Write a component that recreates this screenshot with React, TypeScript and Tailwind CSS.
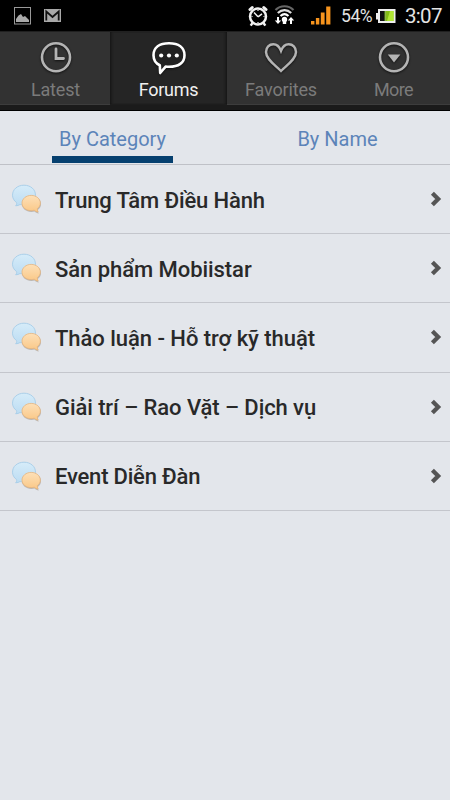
import clsx from "clsx";
import type { ReactNode } from "react";

type NavItem = {
  label: string;
  icon: ReactNode;
  active?: boolean;
  className: string;
  labelClass: string;
};

type Forum = {
  title: string;
  className: string;
};

const ClockIcon = () => (
  <svg width="34" height="34" viewBox="0 0 34 34" fill="none" stroke="#b4b4b4">
    <circle cx="17" cy="17.3" r="14" strokeWidth="2.6" />
    <path d="M17 9v9.5h7.5" strokeWidth="2.8" strokeLinecap="round" />
  </svg>
);

const SpeechIcon = () => (
  <svg width="36" height="36" viewBox="0 0 36 36" fill="none">
    <path
      d="M8.8 26.200C4.600 24.300 2.500 21 2.500 16.200 2.500 8.500 8.500 4.300 18 4.300s15.500 4.200 15.500 11.900c0 7.700-6 11.600-15.500 11.600-1.200 0-2.300 0-3.400-.2L9.200 34z"
      fill="#222"
      stroke="#fff"
      strokeWidth="2.6"
      strokeLinejoin="round"
    />
    <circle cx="10.2" cy="16.500" r="2.100" fill="#fff" />
    <circle cx="18" cy="16.500" r="2.100" fill="#fff" />
    <circle cx="25.800" cy="16.500" r="2.100" fill="#fff" />
  </svg>
);

const HeartIcon = () => (
  <svg width="36" height="34" viewBox="0 0 36 34" fill="none">
    <path
      d="M18 31C12.500 25.300 3 19.500 3 12 3 7.300 6.300 4.300 10.300 4.300c3.600 0 6 2.200 7.700 6.600 1.700-4.400 4.100-6.600 7.700-6.600 4 0 7.300 3 7.300 7.700C33 19.500 23.500 25.300 18 31z"
      stroke="#b4b4b4"
      strokeWidth="2.500"
    />
  </svg>
);

const MoreIcon = () => (
  <svg width="34" height="34" viewBox="0 0 34 34" fill="none">
    <circle cx="17" cy="17.3" r="14" stroke="#b4b4b4" strokeWidth="2.6" />
    <path d="M10.800 14.600h12.600L17 22.500z" fill="#b4b4b4" />
  </svg>
);

const navItems: NavItem[] = [
  {
    label: "Latest",
    icon: <ClockIcon />,
    className: "w-[110px] pl-[1px]",
    labelClass: "tracking-[-0.15px]",
  },
  {
    label: "Forums",
    icon: <SpeechIcon />,
    active: true,
    className: "w-[117px]",
    labelClass: "tracking-[-0.3px]",
  },
  {
    label: "Favorites",
    icon: <HeartIcon />,
    className: "w-[110px] pr-[2px]",
    labelClass: "tracking-[-0.15px]",
  },
  {
    label: "More",
    icon: <MoreIcon />,
    className: "w-[113px]",
    labelClass: "tracking-[-0.6px]",
  },
];

const forums: Forum[] = [
  { title: "Trung Tâm Điều Hành", className: "tracking-[-0.14px]" },
  { title: "Sản phẩm Mobiistar", className: "tracking-[-0.05px]" },
  { title: "Thảo luận - Hỗ trợ kỹ thuật", className: "tracking-[-0.04px]" },
  { title: "Giải trí – Rao Vặt – Dịch vụ", className: "tracking-[-0.08px]" },
  { title: "Event Diễn Đàn", className: "tracking-[-0.2px]" },
];

const StatusBar = () => (
  <div className="flex h-[31px] items-center bg-black text-[#e4e4e4]">
    <svg className="ml-[14px]" width="18" height="31" viewBox="0 0 18 31">
      <rect x=".5" y="7.500" width="16" height="16.500" fill="none" stroke="#999" />
      <path d="M2 22v-3l2.500-3.500L7 14l2 3 2-1 4 4v2z" fill="#aaa" />
    </svg>
    <svg className="ml-[12px]" width="18" height="31" viewBox="0 0 18 31">
      <rect x="0" y="9" width="17" height="13" fill="#a9a9a9" />
      <path d="M2.300 20.500v-9l6.200 5.500 6.200-5.500v9" fill="none" stroke="#111" strokeWidth="1.800" />
    </svg>

    <svg className="ml-[185px]" width="22" height="31" viewBox="0 0 22 31" fill="none" stroke="#f2f2f2">
      <circle cx="11" cy="16.500" r="8" strokeWidth="2.500" />
      <path d="M11 16.800 7 12.500M11 16.800l4-3" strokeWidth="1.500" />
      <path d="M11 10v1M11 22v1M4.500 16.500h1M16.500 16.500h1" strokeWidth="1.200" />
      <path d="M3 9.500 5.200 7.500M19 9.500 16.800 7.500" strokeWidth="3" strokeLinecap="round" />
      <path d="m5.500 23-1.800 2.700M16.500 23l1.800 2.700" strokeWidth="2.400" />
    </svg>
    <svg className="ml-[5px]" width="22" height="31" viewBox="0 0 22 31" fill="none">
      <path d="M1.500 10c5-5 13-5 18 0" stroke="#666" strokeWidth="2.200" />
      <path d="M3.800 13c4-3.800 9.500-3.800 13.400 0" stroke="#ddd" strokeWidth="2.200" />
      <path d="M6.500 16c2.500-2.300 5.500-2.300 8 0" stroke="#fff" strokeWidth="2.200" />
      <circle cx="10.500" cy="19.500" r="2.700" fill="#fff" />
      <path d="M8.800 20h3.400v4H8.800zM3 17v3.500H.8L4 24l3.200-3.500H5V17zM16 24v-3.500h-2.200L17 17l3.200 3.500H18V24z" fill="#fff" />
    </svg>
    <svg className="ml-[15px]" width="20" height="31" viewBox="0 0 20 31" fill="#f7941d">
      <path d="M0 21h3.400v3.500H0zM4.900 18h3.400v6.500H4.900zM9.800 12.500h3.800v12H9.800zM15.200 6.500h4.200v18h-4.200z" />
    </svg>
    <span className="ml-[10px] mt-[3px] w-[34px] whitespace-nowrap text-[17.5px] leading-none tracking-[-0.4px]">
      54%
    </span>
    <svg className="ml-px" width="20" height="31" viewBox="0 0 20 31">
      <path d="M0 13h2V9h17.500v14H2v-3.500H0z" fill="#eee" />
      <rect x="4" y="11" width="5" height="10" fill="#111" />
      <rect x="8" y="11" width="1.500" height="10" fill="#3d5f14" />
      <rect x="9.500" y="11" width="8" height="10" fill="#83bd15" />
      <path d="M14 11h3.500v10H11z" fill="#b0e534" />
    </svg>
    <span className="ml-[9px] mt-[2px] whitespace-nowrap text-[20.5px] leading-none tracking-[-0.7px]">
      3:07
    </span>
  </div>
);

const NavTab = ({ label, icon, active, className, labelClass }: NavItem) => (
  <div
    className={clsx(
      "flex h-[74px] flex-col items-center border-t border-b",
      className,
      active
        ? "border-t-[#202020] border-b-[#1d1d1d] bg-[#252525] shadow-[inset_3px_0_3px_-2px_#111,inset_-3px_0_3px_-2px_#111]"
        : "border-t-[#202020] border-b-[#3d3d3d] bg-[#323232]",
    )}
  >
    <div className="mt-[8px] flex h-[34px] items-center drop-shadow-[0_1px_1px_#111]">{icon}</div>
    <span
      className={clsx(
        "mt-[5px] text-[18px] leading-[21px]",
        labelClass,
        active ? "text-[#f0f0f0]" : "text-[#7b7b7b]",
      )}
    >
      {label}
    </span>
  </div>
);

const ForumIcon = () => (
  <svg className="ml-[11px] shrink-0" width="32" height="32" viewBox="0 0 32 32">
    <defs>
      <linearGradient id="blue" x2="0" y2="1">
        <stop stopColor="#d6ecf9" />
        <stop offset="1" stopColor="#bcdcf2" />
      </linearGradient>
      <linearGradient id="orange" x2="0" y2="1">
        <stop stopColor="#fde0b8" />
        <stop offset="1" stopColor="#fac887" />
      </linearGradient>
    </defs>
    <path
      d="M5.500 19.500C3 17.800 1.500 15 1.500 12.200 1.500 6.500 6.300 2.200 13 2.200s11.500 4.300 11.500 10S19.700 22 13 22c-1.400 0-2.700-.2-4-.5-1 .8-2.500 1.300-4.300 1.300.9-1 1.200-2 .8-3.300z"
      fill="url(#blue)"
      stroke="#abd0ea"
    />
    <path
      d="M27 26.700c2-1.300 3-3.300 3-5.600 0-4.600-4-8-9.500-8s-9.500 3.400-9.500 8 4 7.900 9.500 7.900c1 0 2-.1 3-.4 1.200 1.100 2.500 1.700 4.300 1.800-.8-1.100-1.100-2.400-.8-3.700z"
      fill="#94887c"
      opacity=".5"
    />
    <path
      d="M26.400 25.500c1.900-1.300 2.900-3.100 2.900-5.400 0-4.300-3.900-7.700-9.100-7.700S11 15.800 11 20.100s3.900 7.500 9.200 7.500c1 0 2-.1 3-.4 1.200 1.100 2.500 1.600 4 1.700-.7-1.100-1-2.200-.8-3.400z"
      fill="url(#orange)"
      stroke="#e9b57c"
      strokeWidth=".8"
    />
  </svg>
);

const ForumRow = ({ title, className }: Forum) => (
  <div className="flex h-[69.2px] items-center border-b border-[#c4c6cc]">
    <ForumIcon />
    <span
      className={clsx(
        "ml-[12px] mt-[3px] flex-1 whitespace-nowrap text-[22px] leading-[28px] font-medium text-[#292929]",
        className,
      )}
    >
      {title}
    </span>
    <svg className="mr-[8px] shrink-0" width="12" height="16" viewBox="0 0 12 16">
      <path d="m2.400 2.200 5.800 5.800-5.800 5.800" fill="none" stroke="#555" strokeWidth="4.200" />
    </svg>
  </div>
);

const App = () => {
  return (
    <div className="h-[800px] w-[450px] overflow-hidden bg-[#e3e6eb] font-[Roboto,sans-serif]">
      <StatusBar />
      <div className="flex h-[80px] overflow-hidden border-b border-black bg-[#1b1b1b]">
        {navItems.map((item) => (
          <NavTab key={item.label} {...item} />
        ))}
      </div>
      <div className="flex h-[54px] border-b border-[#bfc1c7] text-[20px] leading-[24px] text-[#5c84b9]">
        <div className="flex w-1/2 flex-col items-center">
          <span className="mt-[16px]">By Category</span>
          <div className="mt-[5px] h-[7px] w-[121px] bg-[#06406f]" />
        </div>
        <div className="flex w-1/2 flex-col items-center">
          <span className="mt-[16px]">By Name</span>
        </div>
      </div>
      {forums.map((forum) => (
        <ForumRow key={forum.title} {...forum} />
      ))}
    </div>
  );
};

export default App;
